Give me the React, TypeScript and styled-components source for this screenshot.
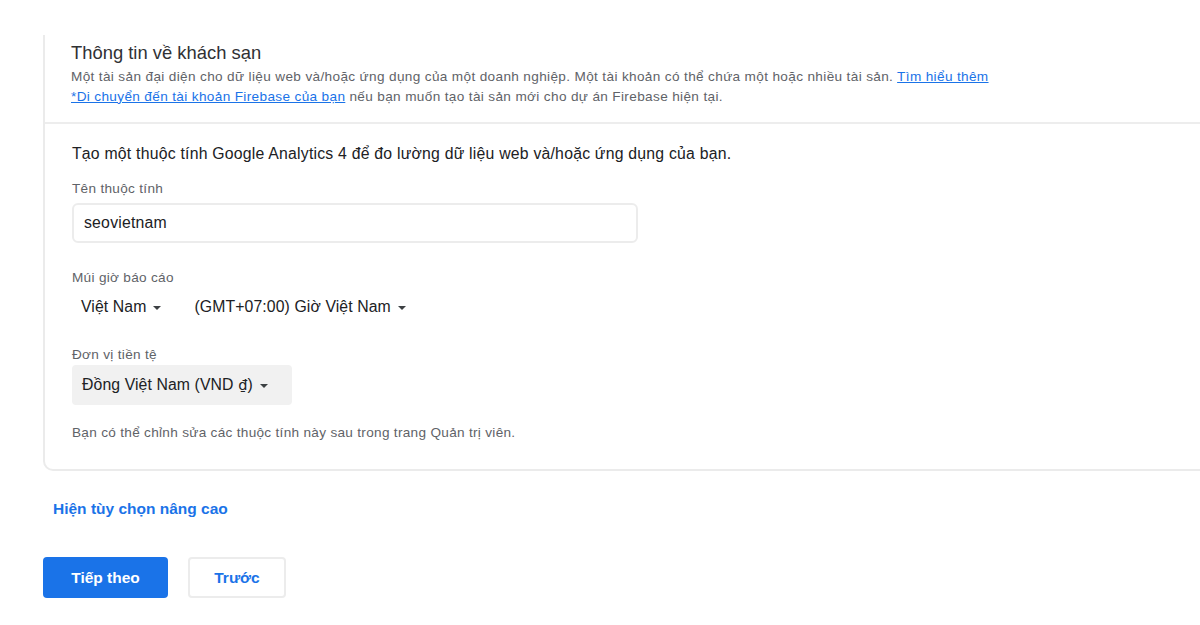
import styled, { createGlobalStyle } from "styled-components";

const GlobalStyle = createGlobalStyle`
  html, body {
    margin: 0;
    padding: 0;
    background: #ffffff;
    font-family: "Liberation Sans", Arial, sans-serif;
    -webkit-font-smoothing: antialiased;
  }
`;

const Page = styled.div`
  width: 1200px;
  height: 625px;
  overflow: hidden;
  padding: 35px 0 0 43px;
  box-sizing: border-box;
`;

const Card = styled.section`
  margin-right: -30px;
  border: 2px solid #ebebeb;
  border-top: none;
  border-radius: 0 0 10px 10px;
  background: #fff;
`;

const CardHeader = styled.div`
  padding: 6px 0 16px 26px;
  border-bottom: 2px solid #ededed;
`;

const Title = styled.h2`
  margin: 0 0 2px;
  font-size: 18.4px;
  line-height: 24px;
  font-weight: 400;
  color: #303134;
`;

const Description = styled.p`
  margin: 0;
  font-size: 13.6px;
  letter-spacing: 0.35px;
  line-height: 19.5px;
  color: #5f6368;
  white-space: nowrap;
`;

const Link = styled.a`
  color: #1a73e8;
  text-decoration: underline;
`;

const CardBody = styled.div`
  display: flex;
  flex-direction: column;
  align-items: flex-start;
  padding: 20px 0 28px 27px;
`;

const Lead = styled.p`
  margin: 0;
  font-size: 15.8px;
  letter-spacing: 0.22px;
  line-height: 20px;
  color: #202124;
`;

const FieldLabel = styled.label<{ $gap: number }>`
  display: block;
  margin-top: ${({ $gap }) => $gap}px;
  font-size: 13.6px;
  letter-spacing: 0.3px;
  line-height: 16px;
  color: #5f6368;
`;

const TextInput = styled.div`
  margin-top: 6px;
  width: 566px;
  height: 40px;
  box-sizing: border-box;
  display: flex;
  align-items: center;
  padding: 0 10px;
  border: 2px solid #ececec;
  border-radius: 6px;
  font-size: 15.8px;
  letter-spacing: 0.22px;
  color: #202124;
`;

const SelectRow = styled.div`
  margin-top: 5px;
  display: flex;
  align-items: center;
  gap: 14px;
`;

const SelectButton = styled.div<{ $filled?: boolean }>`
  display: inline-flex;
  align-items: center;
  gap: 7px;
  height: ${({ $filled }) => ($filled ? 40 : 32)}px;
  padding: 0 ${({ $filled }) => ($filled ? 24 : 10)}px 0 ${({ $filled }) => ($filled ? 10 : 9)}px;
  box-sizing: border-box;
  border-radius: 4px;
  background: ${({ $filled }) => ($filled ? "#f1f1f1" : "transparent")};
  font-size: 15.8px;
  letter-spacing: 0.1px;
  color: #202124;
`;

const Currency = styled.span`
  font-family: "DejaVu Sans", "Noto Sans", sans-serif;
  font-size: 14.5px;
`;

const Caret = styled.span`
  width: 0;
  height: 0;
  border-left: 4px solid transparent;
  border-right: 4px solid transparent;
  border-top: 4px solid #3c4043;
  margin-top: 1px;
`;

const FilledSelectWrap = styled.div`
  margin-top: 2px;
`;

const Note = styled.p`
  margin: 20px 0 0;
  font-size: 13.6px;
  letter-spacing: 0.3px;
  line-height: 16px;
  color: #5f6368;
`;

const Footer = styled.div`
  display: flex;
  flex-direction: column;
  align-items: flex-start;
`;

const AdvancedLink = styled.a`
  margin: 28px 0 0 10px;
  font-size: 15.5px;
  line-height: 20px;
  font-weight: 700;
  color: #1a73e8;
`;

const Actions = styled.div`
  margin-top: 38px;
  display: flex;
  gap: 20px;
`;

const Button = styled.button<{ $primary?: boolean }>`
  height: 41px;
  padding: 0;
  width: ${({ $primary }) => ($primary ? 125 : 98)}px;
  border-radius: 4px;
  border: ${({ $primary }) => ($primary ? "none" : "2px solid #ececec")};
  background: ${({ $primary }) => ($primary ? "#1a73e8" : "#ffffff")};
  color: ${({ $primary }) => ($primary ? "#ffffff" : "#1a73e8")};
  font-family: inherit;
  font-size: 15.5px;
  font-weight: 700;
`;

export default function App() {
  return (
    <>
      <GlobalStyle />
      <Page>
        <Card>
          <CardHeader>
            <Title>Thông tin về khách sạn</Title>
            <Description>
              Một tài sản đại diện cho dữ liệu web và/hoặc ứng dụng của một doanh nghiệp. Một tài khoản có thể
              chứa một hoặc nhiều tài sản. <Link>Tìm hiểu thêm</Link>
            </Description>
            <Description>
              <Link>*Di chuyển đến tài khoản Firebase của bạn</Link> nếu bạn muốn tạo tài sản mới cho dự án
              Firebase hiện tại.
            </Description>
          </CardHeader>
          <CardBody>
            <Lead>Tạo một thuộc tính Google Analytics 4 để đo lường dữ liệu web và/hoặc ứng dụng của bạn.</Lead>
            <FieldLabel $gap={17}>Tên thuộc tính</FieldLabel>
            <TextInput>seovietnam</TextInput>
            <FieldLabel $gap={27}>Múi giờ báo cáo</FieldLabel>
            <SelectRow>
              <SelectButton>
                Việt Nam <Caret />
              </SelectButton>
              <SelectButton>
                (GMT+07:00) Giờ Việt Nam <Caret />
              </SelectButton>
            </SelectRow>
            <FieldLabel $gap={24}>Đơn vị tiền tệ</FieldLabel>
            <FilledSelectWrap>
              <SelectButton $filled>
                <span>
                  Đồng Việt Nam (VND <Currency>₫</Currency>)
                </span>
                <Caret />
              </SelectButton>
            </FilledSelectWrap>
            <Note>Bạn có thể chỉnh sửa các thuộc tính này sau trong trang Quản trị viên.</Note>
          </CardBody>
        </Card>
        <Footer>
          <AdvancedLink>Hiện tùy chọn nâng cao</AdvancedLink>
          <Actions>
            <Button $primary>Tiếp theo</Button>
            <Button>Trước</Button>
          </Actions>
        </Footer>
      </Page>
    </>
  );
}
